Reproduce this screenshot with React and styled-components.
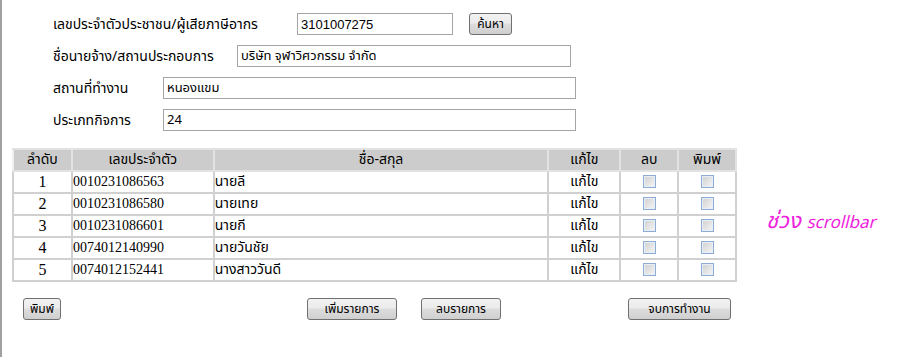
import React from "react";
import styled, { createGlobalStyle } from "styled-components";

const Global = createGlobalStyle`
  html, body { margin: 0; padding: 0; background: #fff; }
  body { font-family: Tahoma, "Noto Sans Thai", Loma, Garuda, "DejaVu Sans", sans-serif; }
`;

const Page = styled.div`
  min-height: 357px;
  box-sizing: border-box;
  border-left: 2px solid #a0a0a0;
  padding-top: 13px;
`;

const Form = styled.div`
  display: flex;
  flex-direction: column;
  gap: 10px;
  padding-left: 51px;
`;

const FormRow = styled.div`
  display: flex;
  align-items: center;
  height: 22px;
`;

const Label = styled.label`
  width: ${(p) => p.$w}px;
  flex: none;
  font-size: 14px;
  color: #000;
`;

const TextInput = styled.input`
  box-sizing: border-box;
  width: ${(p) => p.$w}px;
  height: 22px;
  border: 1px solid #a5a5a5;
  padding: 1px 3px;
  font-family: ${(p) => (p.$latin ? '"Liberation Sans", Arial, sans-serif' : 'Tahoma, "Noto Sans Thai", Loma, "DejaVu Sans", sans-serif')};
  font-size: 13px;
  color: #000;
  outline: none;
`;

const Btn = styled.button`
  box-sizing: border-box;
  height: 22px;
  margin-left: ${(p) => p.$ml || 0}px;
  width: ${(p) => p.$w}px;
  padding: 0 4px;
  border: 1px solid #707070;
  border-radius: 3px;
  background: linear-gradient(#f2f2f2 0%, #ebebeb 45%, #dddddd 50%, #cfcfcf 100%);
  font-family: Tahoma, "Noto Sans Thai", Loma, "DejaVu Sans", sans-serif;
  font-size: 12px;
  color: #000;
  cursor: pointer;
  white-space: nowrap;
`;

const Middle = styled.div`
  display: flex;
  align-items: center;
  margin-top: 17px;
  padding-left: 10px;
`;

const Table = styled.table`
  width: 725px;
  border-collapse: collapse;
  border: 2px solid #b4b4b4;
  font-size: 14px;
`;

const Th = styled.th`
  height: 20px;
  line-height: 20px;
  padding: 0;
  background: #cccccc;
  border: 2px solid #e2e2e2;
  border-left-color: #f0f0f0;
  font-weight: normal;
  font-size: 14px;
  text-align: center;
  width: ${(p) => p.$w}px;
`;

const Td = styled.td`
  height: 20px;
  line-height: 20px;
  padding: 0;
  border: 2px solid #d0d0d0;
  text-align: ${(p) => p.$align || "left"};
  font-family: ${(p) => (p.$serif ? '"Liberation Serif", "Times New Roman", serif' : "inherit")};
  font-size: ${(p) => p.$fs || 14}px;
  vertical-align: middle;
  overflow: hidden;
`;

const Check = styled.span`
  display: inline-block;
  box-sizing: border-box;
  width: 13px;
  height: 13px;
  vertical-align: middle;
  margin-top: -2px;
  border: 1px solid #8eadd4;
  background: linear-gradient(135deg, #cfcfcf 0%, #f6f6f6 100%);
  box-shadow: inset 0 0 0 1px #e8eef6;
`;

const Note = styled.div`
  margin-left: 29px;
  margin-top: 12px;
  color: #ee22dd;
  font-size: 22px;
  font-style: italic;
  white-space: nowrap;
  span { font-size: 17px; }
`;

const Actions = styled.div`
  display: flex;
  align-items: center;
  margin-top: 16px;
  padding-left: 21px;
`;

const rows = [
  ["1", "0010231086563", "นายลี"],
  ["2", "0010231086580", "นายเทย"],
  ["3", "0010231086601", "นายกี"],
  ["4", "0074012140990", "นายวันชัย"],
  ["5", "0074012152441", "นางสาววันดี"],
];

export default function App() {
  return (
    <>
      <Global />
      <Page>
        <Form>
          <FormRow>
            <Label $w={244}>เลขประจำตัวประชาชน/ผู้เสียภาษีอากร</Label>
            <TextInput $w={156} $latin defaultValue="3101007275" />
            <Btn $ml={16} $w={43}>ค้นหา</Btn>
          </FormRow>
          <FormRow>
            <Label $w={184}>ชื่อนายจ้าง/สถานประกอบการ</Label>
            <TextInput $w={334} defaultValue="บริษัท จุฬาวิศวกรรม จำกัด" />
          </FormRow>
          <FormRow>
            <Label $w={110}>สถานที่ทำงาน</Label>
            <TextInput $w={413} defaultValue="หนองแขม" />
          </FormRow>
          <FormRow>
            <Label $w={110}>ประเภทกิจการ</Label>
            <TextInput $w={413} defaultValue="24" />
          </FormRow>
        </Form>
        <Middle>
          <Table>
            <thead>
              <tr>
                <Th $w={57}>ลำดับ</Th>
                <Th $w={140}>เลขประจำตัว</Th>
                <Th $w={334}>ชื่อ-สกุล</Th>
                <Th $w={70}>แก้ไข</Th>
                <Th $w={56}>ลบ</Th>
                <Th $w={56}>พิมพ์</Th>
              </tr>
            </thead>
            <tbody>
              {rows.map((r) => (
                <tr key={r[0]}>
                  <Td $align="center" $serif $fs={16}>{r[0]}</Td>
                  <Td $serif $fs={14}>{r[1]}</Td>
                  <Td>{r[2]}</Td>
                  <Td $align="center">แก้ไข</Td>
                  <Td $align="center"><Check /></Td>
                  <Td $align="center"><Check /></Td>
                </tr>
              ))}
            </tbody>
          </Table>
          <Note>ช่วง <span>scrollbar</span></Note>
        </Middle>
        <Actions>
          <Btn $w={38}>พิมพ์</Btn>
          <Btn $ml={246} $w={90}>เพิ่มรายการ</Btn>
          <Btn $ml={24} $w={80}>ลบรายการ</Btn>
          <Btn $ml={127} $w={103}>จบการทำงาน</Btn>
        </Actions>
      </Page>
    </>
  );
}
